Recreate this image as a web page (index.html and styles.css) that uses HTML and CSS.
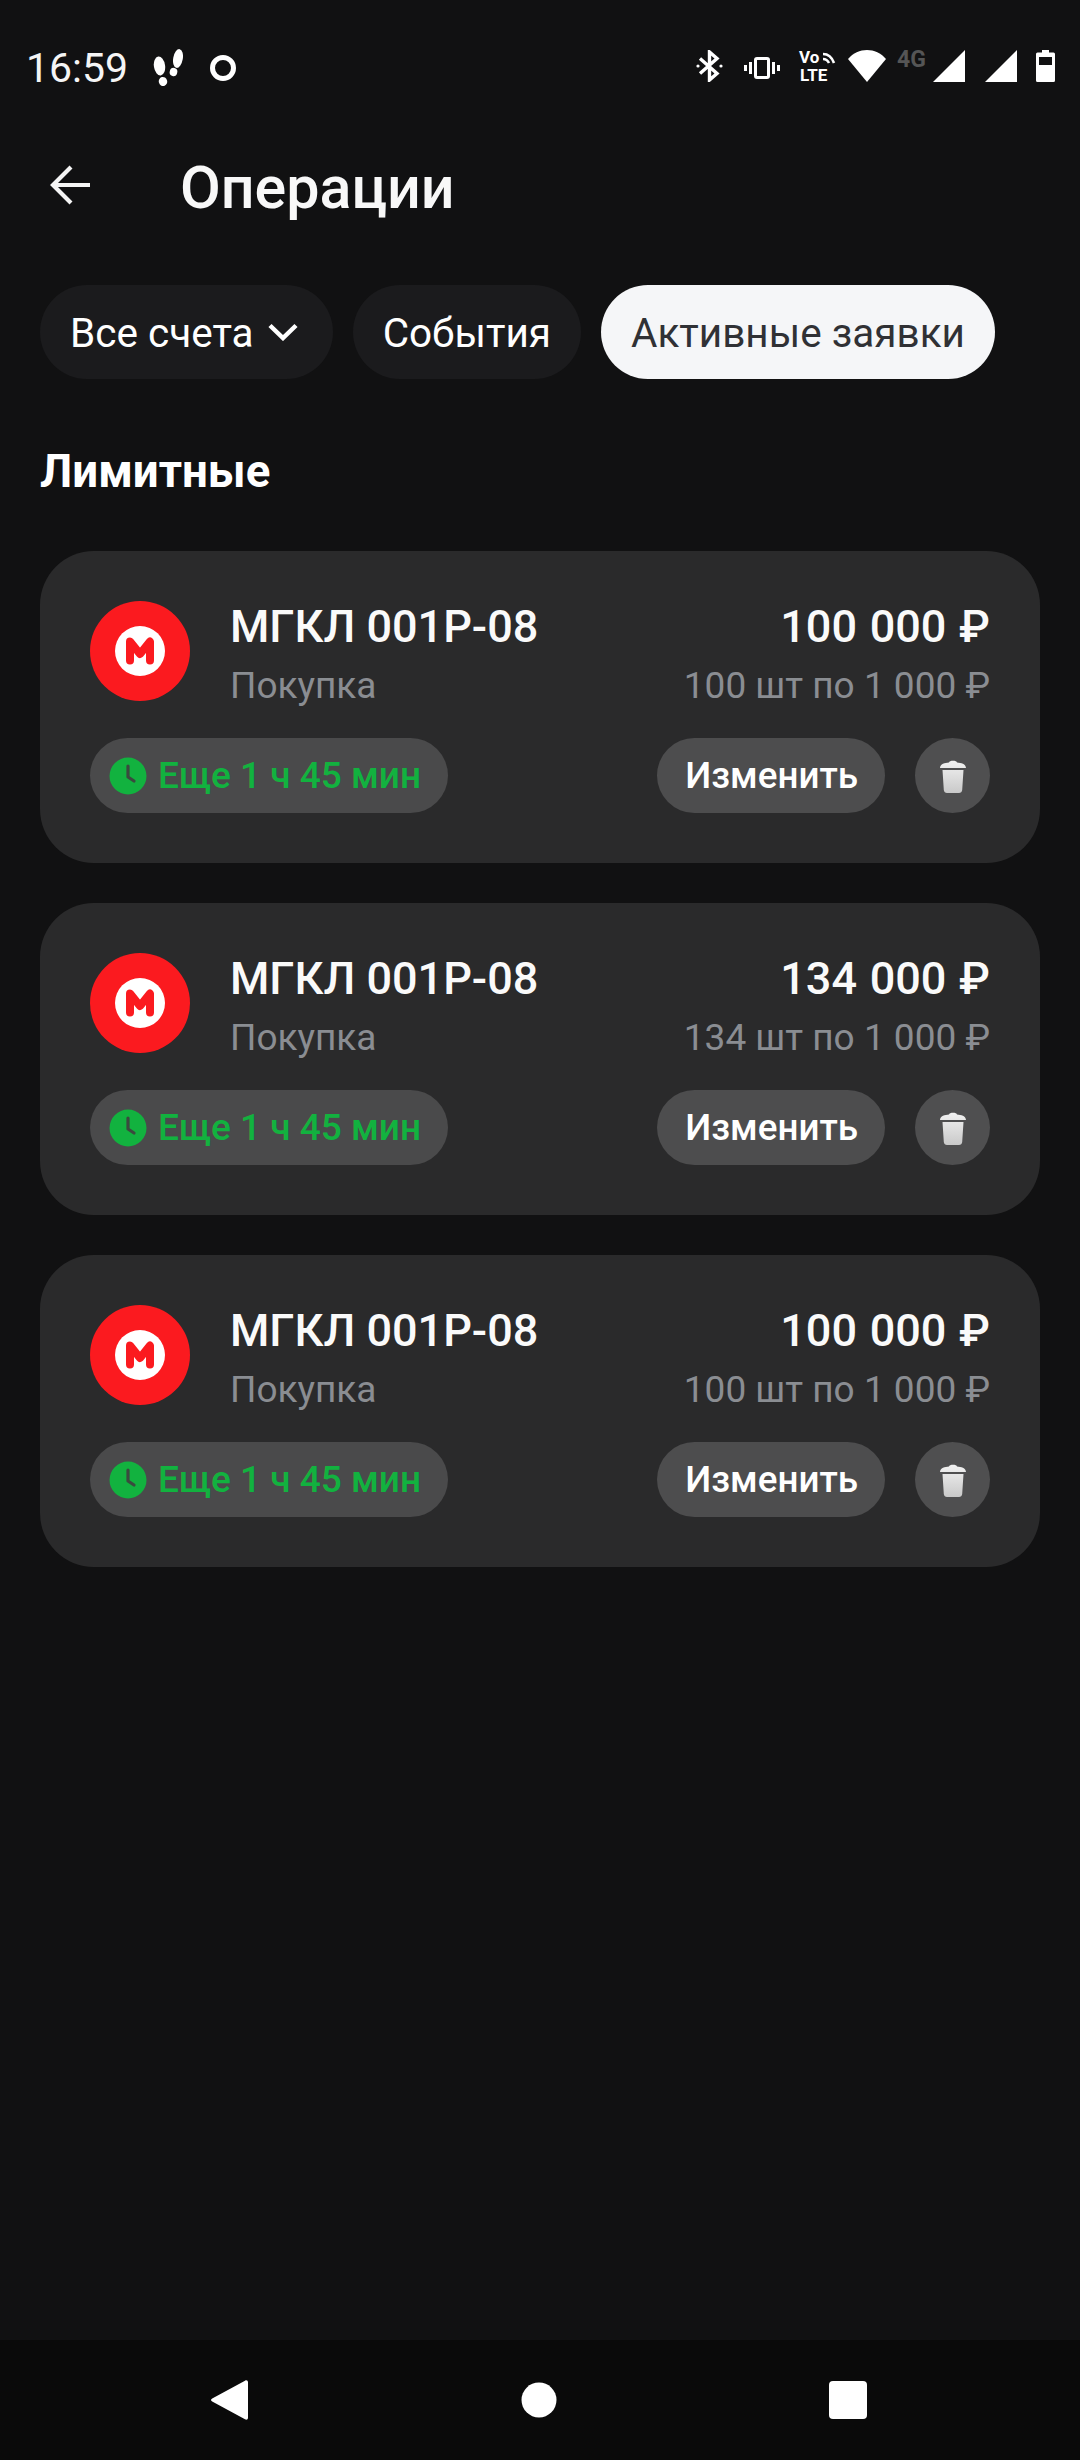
FILE: index.html
```html
<!DOCTYPE html>
<html lang="ru">
<head>
<meta charset="utf-8">
<title>Операции</title>
<link rel="stylesheet" href="styles.css">
</head>
<body>
<div class="app">
  <div class="status">
    <div class="status-left">
      <span class="time">16:59</span>
      <svg class="ic-steps" width="30" height="38" viewBox="0 0 30 38" fill="#fff">
        <ellipse cx="6.500" cy="17" rx="5.600" ry="9.500" transform="rotate(-8 6.500 17)"/>
        <ellipse cx="10" cy="32.500" rx="4.200" ry="4.600" transform="rotate(-15 10 32.500)"/>
        <ellipse cx="25" cy="9.500" rx="4.800" ry="9.500" transform="rotate(10 25 9.500)"/>
        <ellipse cx="20.500" cy="23" rx="3.800" ry="4.200" transform="rotate(15 20.500 23)"/>
      </svg>
      <svg class="ic-ring" width="28" height="26" viewBox="0 0 28 26"><circle cx="14" cy="13" r="10.500" fill="none" stroke="#fff" stroke-width="5"/></svg>
    </div>
    <div class="status-right">
      <svg class="ic-bt" width="27" height="32" viewBox="0 0 27 32" fill="none" stroke="#fff" stroke-width="3.400">
        <path d="M4 8.500 21 23.500 13.500 30V2L21 8.500 4 23.500"/>
        <circle cx="2" cy="16" r="1.600" fill="#fff" stroke="none"/>
        <circle cx="25" cy="16" r="1.600" fill="#fff" stroke="none"/>
      </svg>
      <svg class="ic-vib" width="36" height="22" viewBox="0 0 36 22" fill="none" stroke="#fff" stroke-width="3">
        <rect x="11.500" y="1.500" width="13" height="19" rx="1.500"/>
        <path d="M6.500 5v12M1.500 8v6M29.500 5v12M34.500 8v6"/>
      </svg>
      <svg class="ic-volte" width="36" height="32" viewBox="0 0 36 32" fill="#fff">
        <text class="volte-text" x="0" y="13">Vo</text>
        <text class="volte-text" x="1" y="31">LTE</text>
        <path d="M24 4c5 0 9 3.500 11 9M24 9c3 0 5 2 6 4" fill="none" stroke="#fff" stroke-width="2.600"/>
      </svg>
      <svg class="ic-wifi" width="38" height="32" viewBox="0 0 38 32" fill="#fff"><path d="M0 9C5 3 12 0 19 0s14 3 19 9L19 32z"/></svg>
      <span class="net">4G</span>
      <svg class="ic-sig" width="32" height="32" viewBox="0 0 32 32" fill="#fff"><path d="M0 32 32 0v32z"/></svg>
      <svg class="ic-sig2" width="32" height="32" viewBox="0 0 32 32" fill="#fff"><path d="M0 32 32 0v32z"/></svg>
      <svg class="ic-bat" width="19" height="32" viewBox="0 0 19 32" fill="#fff"><path fill-rule="evenodd" d="M6 0h7v2.500h4.500A1.500 1.500 0 0 1 19 4v26.500a1.500 1.500 0 0 1-1.500 1.500h-16A1.500 1.500 0 0 1 0 30.500V4a1.500 1.500 0 0 1 1.500-1.500H6zM3 7v8h13V7z"/></svg>
    </div>
  </div>

  <header class="header">
    <svg class="ic-back" width="40" height="40" viewBox="0 0 40 40" fill="none" stroke="#f5f5f5" stroke-width="4.200">
      <path d="M40 20H3M21 2 3 20l18 18"/>
    </svg>
    <h1 class="title">Операции</h1>
  </header>

  <nav class="chips">
    <div class="chip chip-dark chip-drop"><span class="chip-label">Все счета</span>
      <svg class="ic-chev" width="30" height="18" viewBox="0 0 30 18" fill="none" stroke="#fff" stroke-width="4.500"><path d="M2 2.500 15 15 28 2.500"/></svg>
    </div>
    <div class="chip chip-dark"><span class="chip-label">События</span></div>
    <div class="chip chip-light"><span class="chip-label">Активные заявки</span></div>
  </nav>

  <h2 class="section">Лимитные</h2>

  <main class="cards">
    <article class="card">
      <div class="card-top">
        <svg class="logo" width="100" height="100" viewBox="0 0 100 100">
          <circle cx="50" cy="50" r="50" fill="#fb1a1f"/>
          <circle cx="50" cy="50" r="25" fill="#fff"/>
          <path d="M40 59.500V40.500L50 53 60 40.500V59.500" fill="none" stroke="#fb1a1f" stroke-width="8" stroke-linecap="round" stroke-linejoin="round"/>
        </svg>
        <div class="info">
          <div class="name">МГКЛ 001Р-08</div>
          <div class="sub">Покупка</div>
        </div>
        <div class="amounts">
          <div class="name">100 000 ₽</div>
          <div class="sub">100 шт по 1 000 ₽</div>
        </div>
      </div>
      <div class="card-bottom">
        <div class="timer">
          <svg class="ic-clock" width="38" height="38" viewBox="0 0 38 38"><circle cx="19" cy="19" r="18.500" fill="#12b23f"/><path d="M19 9v11l6 4" fill="none" stroke="#3a4a3e" stroke-width="3.200" stroke-linecap="round" stroke-linejoin="round"/></svg>
          <span>Еще 1 ч 45 мин</span>
        </div>
        <div class="btn">Изменить</div>
        <div class="btn-round">
          <svg width="26" height="34" viewBox="0 0 26 34"><defs><linearGradient id="tg" x1="0" y1="0" x2="0" y2="1"><stop offset="0" stop-color="#f2f2f2"/><stop offset="1" stop-color="#c9c9c9"/></linearGradient></defs><path fill="url(#tg)" d="M9 3.500C9 1 17 1 17 3.500C21 3.800 26 5 26 9H0C0 5 5 3.800 9 3.500zM2.500 11h21l-1.300 20c-.2 2-1.500 3-3.200 3H7c-1.700 0-3-1-3.200-3z"/></svg>
        </div>
      </div>
    </article>

    <article class="card">
      <div class="card-top">
        <svg class="logo" width="100" height="100" viewBox="0 0 100 100">
          <circle cx="50" cy="50" r="50" fill="#fb1a1f"/>
          <circle cx="50" cy="50" r="25" fill="#fff"/>
          <path d="M40 59.500V40.500L50 53 60 40.500V59.500" fill="none" stroke="#fb1a1f" stroke-width="8" stroke-linecap="round" stroke-linejoin="round"/>
        </svg>
        <div class="info">
          <div class="name">МГКЛ 001Р-08</div>
          <div class="sub">Покупка</div>
        </div>
        <div class="amounts">
          <div class="name">134 000 ₽</div>
          <div class="sub">134 шт по 1 000 ₽</div>
        </div>
      </div>
      <div class="card-bottom">
        <div class="timer">
          <svg class="ic-clock" width="38" height="38" viewBox="0 0 38 38"><circle cx="19" cy="19" r="18.500" fill="#12b23f"/><path d="M19 9v11l6 4" fill="none" stroke="#3a4a3e" stroke-width="3.200" stroke-linecap="round" stroke-linejoin="round"/></svg>
          <span>Еще 1 ч 45 мин</span>
        </div>
        <div class="btn">Изменить</div>
        <div class="btn-round">
          <svg width="26" height="34" viewBox="0 0 26 34"><path fill="url(#tg)" d="M9 3.500C9 1 17 1 17 3.500C21 3.800 26 5 26 9H0C0 5 5 3.800 9 3.500zM2.500 11h21l-1.300 20c-.2 2-1.500 3-3.200 3H7c-1.700 0-3-1-3.200-3z"/></svg>
        </div>
      </div>
    </article>

    <article class="card">
      <div class="card-top">
        <svg class="logo" width="100" height="100" viewBox="0 0 100 100">
          <circle cx="50" cy="50" r="50" fill="#fb1a1f"/>
          <circle cx="50" cy="50" r="25" fill="#fff"/>
          <path d="M40 59.500V40.500L50 53 60 40.500V59.500" fill="none" stroke="#fb1a1f" stroke-width="8" stroke-linecap="round" stroke-linejoin="round"/>
        </svg>
        <div class="info">
          <div class="name">МГКЛ 001Р-08</div>
          <div class="sub">Покупка</div>
        </div>
        <div class="amounts">
          <div class="name">100 000 ₽</div>
          <div class="sub">100 шт по 1 000 ₽</div>
        </div>
      </div>
      <div class="card-bottom">
        <div class="timer">
          <svg class="ic-clock" width="38" height="38" viewBox="0 0 38 38"><circle cx="19" cy="19" r="18.500" fill="#12b23f"/><path d="M19 9v11l6 4" fill="none" stroke="#3a4a3e" stroke-width="3.200" stroke-linecap="round" stroke-linejoin="round"/></svg>
          <span>Еще 1 ч 45 мин</span>
        </div>
        <div class="btn">Изменить</div>
        <div class="btn-round">
          <svg width="26" height="34" viewBox="0 0 26 34"><path fill="url(#tg)" d="M9 3.500C9 1 17 1 17 3.500C21 3.800 26 5 26 9H0C0 5 5 3.800 9 3.500zM2.500 11h21l-1.300 20c-.2 2-1.500 3-3.200 3H7c-1.700 0-3-1-3.200-3z"/></svg>
        </div>
      </div>
    </article>
  </main>

  <footer class="navbar">
    <svg width="37" height="40" viewBox="0 0 37 40" fill="#fff"><path d="M34 .8c1.500-1 3-.2 3 1.500v35.400c0 1.700-1.500 2.500-3 1.500L1.200 21.500c-1.600-.9-1.600-2.100 0-3z"/></svg>
    <svg width="36" height="36" viewBox="0 0 36 36" fill="#fff"><circle cx="18" cy="18" r="17.500"/></svg>
    <svg width="38" height="38" viewBox="0 0 38 38" fill="#fff"><rect width="38" height="38" rx="4"/></svg>
  </footer>
</div>
</body>
</html>
```

FILE: styles.css
```css
* { box-sizing: border-box; }
html, body { margin: 0; padding: 0; }
body { background: #111112; font-family: Roboto, "Noto Sans", sans-serif; color: #fff; }
.app { width: 1080px; height: 2460px; display: flex; flex-direction: column; overflow: hidden; }

.status { height: 130px; padding: 48px 25px 0 26px; display: flex; justify-content: space-between; align-items: flex-start; }
.status-left { display: flex; align-items: center; height: 40px; }
.time { font-size: 41px; line-height: 40px; color: #f5f5f5; }
.ic-steps { margin-left: 25px; }
.ic-ring { margin-left: 26px; }
.status-right { display: flex; align-items: flex-start; padding-top: 2px; }
.ic-bt { display: block; }
.ic-vib { margin: 7px 0 0 21px; }
.ic-volte { margin-left: 19px; overflow: visible; }
.volte-text { font-family: Roboto, sans-serif; font-size: 17px; font-weight: 700; }
.ic-wifi { margin-left: 13px; }
.net { margin-left: 11px; width: 30px; font-size: 23px; line-height: 20px; font-weight: 700; color: #555; }
.ic-sig { margin-left: 6px; }
.ic-sig2 { margin-left: 20px; }
.ic-bat { margin-left: 19px; }

.header { height: 110px; padding-left: 50px; display: flex; align-items: center; }
.ic-back { flex: none; }
.title { margin: 6px 0 0 90px; font-size: 59.200px; line-height: 66px; font-weight: 500; color: #f8f8f8; }

.chips { margin-top: 45px; padding-left: 40px; display: flex; gap: 20px; }
.chip { height: 94px; border-radius: 47px; padding: 0 30px; display: flex; align-items: center; font-size: 40.500px; font-weight: 400; }
.chip-label { padding-top: 2px; }
.chip-drop { padding-right: 34.500px; }
.chip-dark { background: #1b1b1d; color: #fff; }
.chip-light { background: #f5f6f8; color: #303135; }
.ic-chev { margin-left: 14.500px; }

.section { margin: 68px 0 0 40px; font-size: 45.700px; line-height: 50px; font-weight: 700; color: #fff; }

.cards { margin-top: 54px; padding: 0 40px; display: flex; flex-direction: column; gap: 40px; flex: 1; }
.card { height: 312px; border-radius: 54px; background: #2a2a2b; padding: 50px; display: flex; flex-direction: column; gap: 37px; }
.card-top { display: flex; height: 100px; align-items: flex-start; }
.logo { flex: none; }
.info { margin-left: 40px; flex: 1; }
.amounts { text-align: right; }
.amounts .name { word-spacing: 1.500px; }
.name { font-size: 45px; line-height: 52px; font-weight: 500; color: #fafafa; }
.sub { margin-top: 8px; font-size: 37px; line-height: 50px; color: #8a8d92; }

.card-bottom { display: flex; align-items: center; height: 75px; }
.timer { height: 75px; border-radius: 38px; background: #4a4a4b; padding: 0 27px 0 19px; display: flex; align-items: center; gap: 11px; font-size: 37px; font-weight: 500; color: #12b23f; margin-right: auto; }
.ic-clock { flex: none; }
.btn { height: 75px; border-radius: 38px; background: #4d4d4e; padding: 0 27px 0 28px; display: flex; align-items: center; font-size: 36.800px; font-weight: 500; color: #fff; }
.btn-round { margin-left: 30px; width: 75px; height: 75px; border-radius: 50%; background: #4f4f50; display: flex; align-items: center; justify-content: center; }

.navbar { height: 120px; flex: none; background: #0a0a0a; padding: 0 213px 0 211px; display: flex; align-items: center; justify-content: space-between; }
```
